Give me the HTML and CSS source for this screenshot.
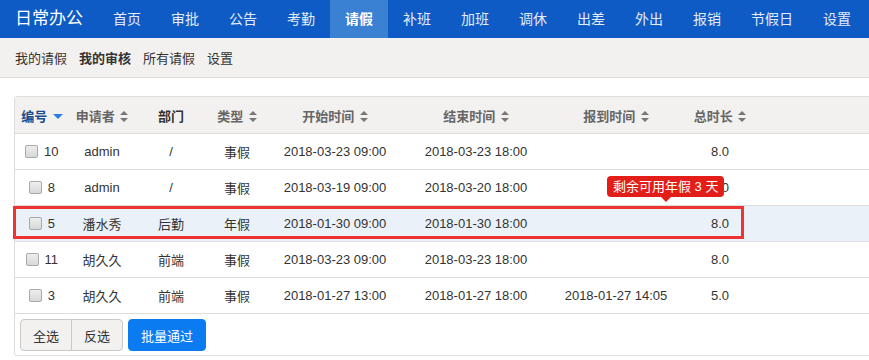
FILE: index.html
```html
<!DOCTYPE html>
<html lang="zh-CN">
<head>
    <meta charset="UTF-8">
    <title>我的审核 - 日常办公</title>
    <link rel="stylesheet" href="styles.css">
</head>
<body>
    <div class="navbar">
        <span class="brand">日常办公</span>
        <a class="nav-item">首页</a>
        <a class="nav-item">审批</a>
        <a class="nav-item">公告</a>
        <a class="nav-item">考勤</a>
        <a class="nav-item active">请假</a>
        <a class="nav-item">补班</a>
        <a class="nav-item">加班</a>
        <a class="nav-item">调休</a>
        <a class="nav-item">出差</a>
        <a class="nav-item">外出</a>
        <a class="nav-item">报销</a>
        <a class="nav-item">节假日</a>
        <a class="nav-item">设置</a>
    </div>

    <div class="subnav">
        <a>我的请假</a>
        <a class="current">我的审核</a>
        <a>所有请假</a>
        <a>设置</a>
    </div>

    <div class="content">
        <div class="panel">
            <table class="grid">
                <colgroup>
                    <col style="width:54px">
                    <col style="width:66px">
                    <col style="width:72px">
                    <col style="width:60px">
                    <col style="width:136px">
                    <col style="width:146px">
                    <col style="width:134px">
                    <col style="width:74px">
                    <col>
                </colgroup>
                <thead>
                    <tr>
                        <th class="sorted">编号 <i class="caret-down"></i></th>
                        <th>申请者 <i class="sort"></i></th>
                        <th class="plain">部门</th>
                        <th>类型 <i class="sort"></i></th>
                        <th>开始时间 <i class="sort"></i></th>
                        <th>结束时间 <i class="sort"></i></th>
                        <th>报到时间 <i class="sort"></i></th>
                        <th>总时长 <i class="sort"></i></th>
                        <th></th>
                    </tr>
                </thead>
                <tbody>
                    <tr>
                        <td><span class="check"></span> 10</td>
                        <td>admin</td>
                        <td>/</td>
                        <td>事假</td>
                        <td>2018-03-23 09:00</td>
                        <td>2018-03-23 18:00</td>
                        <td></td>
                        <td>8.0</td>
                        <td></td>
                    </tr>
                    <tr>
                        <td><span class="check"></span> 8</td>
                        <td>admin</td>
                        <td>/</td>
                        <td>事假</td>
                        <td>2018-03-19 09:00</td>
                        <td>2018-03-20 18:00</td>
                        <td></td>
                        <td>8.0</td>
                        <td></td>
                    </tr>
                    <tr class="selected">
                        <td><span class="check"></span> 5</td>
                        <td>潘水秀</td>
                        <td>后勤</td>
                        <td>年假</td>
                        <td>2018-01-30 09:00</td>
                        <td>2018-01-30 18:00</td>
                        <td></td>
                        <td>8.0</td>
                        <td></td>
                    </tr>
                    <tr>
                        <td><span class="check"></span> 11</td>
                        <td>胡久久</td>
                        <td>前端</td>
                        <td>事假</td>
                        <td>2018-03-23 09:00</td>
                        <td>2018-03-23 18:00</td>
                        <td></td>
                        <td>8.0</td>
                        <td></td>
                    </tr>
                    <tr>
                        <td><span class="check"></span> 3</td>
                        <td>胡久久</td>
                        <td>前端</td>
                        <td>事假</td>
                        <td>2018-01-27 13:00</td>
                        <td>2018-01-27 18:00</td>
                        <td>2018-01-27 14:05</td>
                        <td>5.0</td>
                        <td></td>
                    </tr>
                </tbody>
            </table>

            <div class="toolbar">
                <div class="btn-group">
                    <button class="btn">全选</button>
                    <button class="btn">反选</button>
                </div>
                <button class="btn btn-primary">批量通过</button>
            </div>

            <div class="tip">剩余可用年假 3 天</div>
            <div class="mark"></div>
        </div>
    </div>
</body>
</html>
```

FILE: styles.css
```css
body {
    margin: 0;
    font-family: "Liberation Sans", "Noto Sans CJK SC", sans-serif;
    font-size: 13px;
    color: #333;
    overflow: hidden;
    background: #fff;
}
a {
    text-decoration: none;
    cursor: pointer;
}

.navbar {
    display: flex;
    height: 38px;
    background: #0e5bc5;
    white-space: nowrap;
}
.brand {
    padding: 0 15px;
    line-height: 38px;
    font-size: 17px;
    color: #fff;
}
.nav-item {
    padding: 0 15px;
    line-height: 38px;
    font-size: 14px;
    color: #e4ecf8;
}
.nav-item.active {
    background: #3a80d3;
    color: #fff;
    font-weight: bold;
}

.subnav {
    display: flex;
    gap: 12px;
    height: 39px;
    padding: 0 15px;
    align-items: center;
    background: #f2f1f0;
    border-bottom: 1px solid #dcdcdc;
}
.subnav a {
    color: #333;
}
.subnav .current {
    font-weight: bold;
}

.content {
    padding: 18px 0 0 14px;
}
.panel {
    position: relative;
    width: 900px;
    border: 1px solid #ddd;
    border-radius: 3px;
}
.grid {
    width: 100%;
    table-layout: fixed;
    border-collapse: collapse;
}
.grid th,
.grid td {
    text-align: center;
    white-space: nowrap;
    border-bottom: 1px solid #ddd;
    padding: 0;
}
.grid th {
    height: 36px;
    background: #f2f1f0;
    color: #666;
    font-weight: bold;
}
.grid th.sorted {
    color: #1b4d8e;
}
.grid th.plain {
    color: #333;
}
.grid td {
    height: 35px;
}
.grid tr.selected td {
    background: #eaf1f8;
}

.sort {
    display: inline-block;
    position: relative;
    width: 8px;
    height: 11px;
    vertical-align: -1px;
    margin-left: 2px;
}
.sort::before,
.sort::after {
    content: "";
    position: absolute;
    left: 0;
    border-left: 4px solid transparent;
    border-right: 4px solid transparent;
}
.sort::before {
    top: 0;
    border-bottom: 4px solid #777;
}
.sort::after {
    bottom: 0;
    border-top: 4px solid #777;
}
.caret-down {
    display: inline-block;
    margin-left: 2px;
    vertical-align: 2px;
    border-left: 5px solid transparent;
    border-right: 5px solid transparent;
    border-top: 5px solid #2b7de0;
}

.check {
    display: inline-block;
    width: 11px;
    height: 11px;
    border: 1px solid #a9a9a9;
    border-radius: 2px;
    background: linear-gradient(#eeeeee, #d8d8d8);
    vertical-align: -2px;
    margin-right: 2px;
}

.toolbar {
    display: flex;
    gap: 5px;
    padding: 5px 5px 4px;
}
.btn-group {
    display: flex;
}
.btn {
    height: 32px;
    padding: 0 12px;
    font-family: inherit;
    font-size: 13px;
    color: #333;
    background: #f2f1f0;
    border: 1px solid #c8c8c8;
    border-radius: 4px;
}
.btn-group .btn:first-child {
    border-radius: 4px 0 0 4px;
}
.btn-group .btn + .btn {
    margin-left: -1px;
    border-radius: 0 4px 4px 0;
}
.btn-primary {
    padding: 0 12px;
    color: #fff;
    background: #0b7bf2;
    border-color: #0b7bf2;
}

.tip {
    position: absolute;
    left: 592px;
    top: 79px;
    padding: 0 6px;
    height: 21px;
    line-height: 21px;
    font-size: 13px;
    color: #fff;
    background: #e31e18;
    border-radius: 4px;
    white-space: nowrap;
}
.tip::after {
    content: "";
    position: absolute;
    left: 50%;
    bottom: -5px;
    margin-left: -5px;
    border-left: 5px solid transparent;
    border-right: 5px solid transparent;
    border-top: 5px solid #e31e18;
}
.mark {
    position: absolute;
    left: -2px;
    top: 109px;
    width: 725px;
    height: 27px;
    border: 3px solid #ee3333;
}
```
